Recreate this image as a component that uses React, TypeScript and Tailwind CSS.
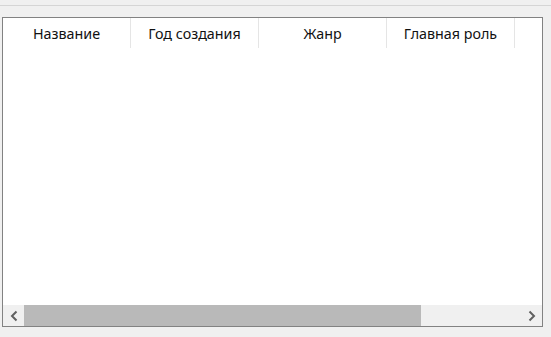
import React from "react";

const cols = ["Название", "Год создания", "Жанр", "Главная роль"];

export default function App() {
  return (
    <div
      className="w-[551px] h-[337px] bg-[#f0f0f0] overflow-hidden flex flex-col"
      style={{ fontFamily: '"Segoe UI", "Noto Sans", sans-serif' }}
    >
      <div className="h-[5px]" />
      <div className="h-px bg-[#d5d5d5]" />
      <div className="h-[11px]" />
      <div className="ml-[2px] w-[541px] h-[310px] border border-[#828282] bg-white flex flex-col">
        <div className="flex h-[30px]">
          {cols.map((c) => (
            <div
              key={c}
              className="w-[128px] h-full border-r border-[#e5e5e5] flex items-center justify-center text-[14.3px] text-[#111] leading-none pt-[2px]"
            >
              {c}
            </div>
          ))}
        </div>
        <div className="flex-1" />
        <div className="h-[21px] flex bg-[#f0f0f0]">
          <div className="w-[21px] h-full flex items-center justify-center">
            <svg width="8" height="12" viewBox="0 0 8 12">
              <path d="M6.5 1.5 L2 6 L6.5 10.5" stroke="#606060" strokeWidth="2" fill="none" />
            </svg>
          </div>
          <div className="w-[397px] h-full bg-[#b9b9b9]" />
          <div className="flex-1" />
          <div className="w-[21px] h-full flex items-center justify-center">
            <svg width="8" height="12" viewBox="0 0 8 12">
              <path d="M1.5 1.5 L6 6 L1.5 10.5" stroke="#606060" strokeWidth="2" fill="none" />
            </svg>
          </div>
        </div>
      </div>
    </div>
  );
}
